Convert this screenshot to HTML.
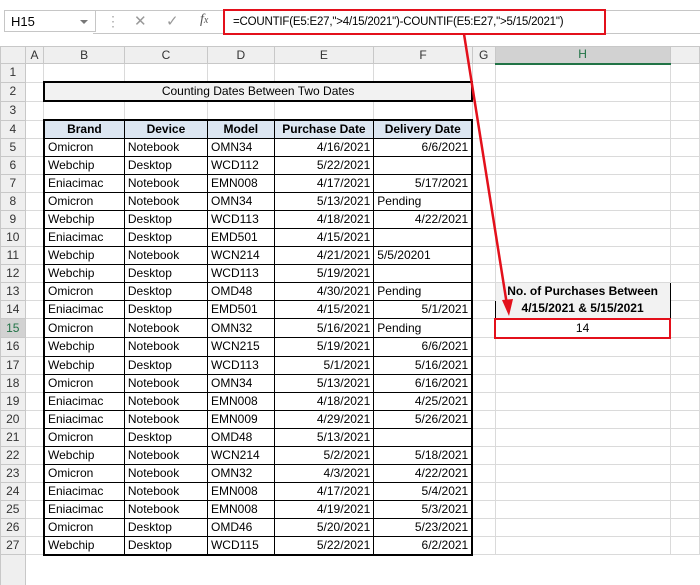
<!DOCTYPE html>
<html><head><style>
body{margin:0;width:700px;height:574px;overflow:hidden;background:#fff;font-family:"Liberation Sans",Calibri,sans-serif;position:relative}
.top{position:absolute;left:0;top:0;width:700px;height:46px;background:#fff;border-bottom:1px solid #d4d4d4}
.nb{position:absolute;left:4px;top:10px;width:92px;height:22px;border:1px solid #c6c6c6;font-size:13px;line-height:22px;box-sizing:border-box;padding-left:6px}
.nb:after{content:"";position:absolute;right:7px;top:9px;border:4px solid transparent;border-top:4px solid #777}
.fx{position:absolute;left:93px;top:10px;width:610px;height:22px;border:1px solid #c6c6c6;border-left:none}
table{position:absolute;left:0;top:46px;border-collapse:collapse;table-layout:fixed;font-size:12px}
td{height:17px;padding:0 3px;border:1px solid #dadada;white-space:nowrap;overflow:hidden;line-height:15px}
tr.h td{height:15.5px;background:#efefef;text-align:center;color:#333;border-color:#c8c8c8}
td.r{background:#efefef;text-align:center;color:#333;border-color:#c8c8c8;padding:0}
.b{border:1px solid #000}
.rt{text-align:right}
.hd{background:#dce6f1;text-align:center;font-weight:bold;border:1px solid #000}
</style></head><body>
<div class="top">
<div class="nb">H15</div>
<div style="position:absolute;left:106px;top:13px;color:#aaa;font-size:14px">⋮</div>
<div class="fx"></div>
<div style="position:absolute;left:134px;top:12px;color:#999;font-size:15px">✕</div>
<div style="position:absolute;left:166px;top:12px;color:#999;font-size:15px">✓</div>
<div style="position:absolute;left:200px;top:12px;color:#555;font-size:14px;font-style:italic;font-family:'Liberation Serif',serif">f<span style="font-size:10px">x</span></div>
<div style="position:absolute;left:223px;top:9px;width:371px;height:22px;border:2px solid #e3101b;font-size:11.5px;letter-spacing:-0.2px;line-height:22px;padding-left:8px;white-space:nowrap;overflow:hidden;box-sizing:content-box">=COUNTIF(E5:E27,"&gt;4/15/2021")-COUNTIF(E5:E27,"&gt;5/15/2021")</div>
</div>
<table>
<colgroup><col style="width:25px"><col style="width:19px"><col style="width:81px"><col style="width:84px"><col style="width:67px"><col style="width:100px"><col style="width:99px"><col style="width:23px"><col style="width:179px"><col style="width:30px"></colgroup>
<tr class="h"><td></td><td>A</td><td>B</td><td>C</td><td>D</td><td>E</td><td>F</td><td>G</td><td style="background:#d2d2d2;border-bottom:2px solid #217346;color:#217346">H</td><td></td></tr>
<tr><td class="r">1</td><td></td><td></td><td></td><td></td><td></td><td></td><td></td><td></td><td></td></tr>
<tr><td class="r">2</td><td></td><td colspan="5" style="border:2px solid #000;background:#f2f2f2;text-align:center">Counting Dates Between Two Dates</td><td></td><td></td><td></td></tr>
<tr><td class="r">3</td><td></td><td></td><td></td><td></td><td></td><td></td><td></td><td></td><td></td></tr>
<tr><td class="r">4</td><td></td><td class="hd" style="border-left:2px solid #000;border-top:2px solid #000">Brand</td><td class="hd" style="border-top:2px solid #000">Device</td><td class="hd" style="border-top:2px solid #000">Model</td><td class="hd" style="border-top:2px solid #000">Purchase Date</td><td class="hd" style="border-top:2px solid #000;border-right:2px solid #000">Delivery Date</td><td></td><td></td><td></td></tr>
<tr><td class="r">5</td><td></td><td class="b" style="border-left:2px solid #000">Omicron</td><td class="b">Notebook</td><td class="b">OMN34</td><td class="b rt">4/16/2021</td><td class="b rt" style="border-right:2px solid #000">6/6/2021</td><td></td><td></td><td></td></tr>
<tr><td class="r">6</td><td></td><td class="b" style="border-left:2px solid #000">Webchip</td><td class="b">Desktop</td><td class="b">WCD112</td><td class="b rt">5/22/2021</td><td class="b rt" style="border-right:2px solid #000"></td><td></td><td></td><td></td></tr>
<tr><td class="r">7</td><td></td><td class="b" style="border-left:2px solid #000">Eniacimac</td><td class="b">Notebook</td><td class="b">EMN008</td><td class="b rt">4/17/2021</td><td class="b rt" style="border-right:2px solid #000">5/17/2021</td><td></td><td></td><td></td></tr>
<tr><td class="r">8</td><td></td><td class="b" style="border-left:2px solid #000">Omicron</td><td class="b">Notebook</td><td class="b">OMN34</td><td class="b rt">5/13/2021</td><td class="b" style="border-right:2px solid #000">Pending</td><td></td><td></td><td></td></tr>
<tr><td class="r">9</td><td></td><td class="b" style="border-left:2px solid #000">Webchip</td><td class="b">Desktop</td><td class="b">WCD113</td><td class="b rt">4/18/2021</td><td class="b rt" style="border-right:2px solid #000">4/22/2021</td><td></td><td></td><td></td></tr>
<tr><td class="r">10</td><td></td><td class="b" style="border-left:2px solid #000">Eniacimac</td><td class="b">Desktop</td><td class="b">EMD501</td><td class="b rt">4/15/2021</td><td class="b rt" style="border-right:2px solid #000"></td><td></td><td></td><td></td></tr>
<tr><td class="r">11</td><td></td><td class="b" style="border-left:2px solid #000">Webchip</td><td class="b">Notebook</td><td class="b">WCN214</td><td class="b rt">4/21/2021</td><td class="b" style="border-right:2px solid #000">5/5/20201</td><td></td><td></td><td></td></tr>
<tr><td class="r">12</td><td></td><td class="b" style="border-left:2px solid #000">Webchip</td><td class="b">Desktop</td><td class="b">WCD113</td><td class="b rt">5/19/2021</td><td class="b rt" style="border-right:2px solid #000"></td><td></td><td></td><td></td></tr>
<tr><td class="r">13</td><td></td><td class="b" style="border-left:2px solid #000">Omicron</td><td class="b">Desktop</td><td class="b">OMD48</td><td class="b rt">4/30/2021</td><td class="b" style="border-right:2px solid #000">Pending</td><td></td><td rowspan="2" style="border:1px solid #000;border-bottom:none;background:#f2f2f2;text-align:center;font-weight:bold;line-height:17px;white-space:normal">No. of Purchases Between<br>4/15/2021 &amp; 5/15/2021</td><td></td></tr>
<tr><td class="r">14</td><td></td><td class="b" style="border-left:2px solid #000">Eniacimac</td><td class="b">Desktop</td><td class="b">EMD501</td><td class="b rt">4/15/2021</td><td class="b rt" style="border-right:2px solid #000">5/1/2021</td><td></td><td></td></tr>
<tr><td class="r" style="background:#d2d2d2;color:#217346">15</td><td></td><td class="b" style="border-left:2px solid #000">Omicron</td><td class="b">Notebook</td><td class="b">OMN32</td><td class="b rt">5/16/2021</td><td class="b" style="border-right:2px solid #000">Pending</td><td></td><td style="border:2px solid #e3101b;text-align:center">14</td><td></td></tr>
<tr><td class="r">16</td><td></td><td class="b" style="border-left:2px solid #000">Webchip</td><td class="b">Notebook</td><td class="b">WCN215</td><td class="b rt">5/19/2021</td><td class="b rt" style="border-right:2px solid #000">6/6/2021</td><td></td><td></td><td></td></tr>
<tr><td class="r">17</td><td></td><td class="b" style="border-left:2px solid #000">Webchip</td><td class="b">Desktop</td><td class="b">WCD113</td><td class="b rt">5/1/2021</td><td class="b rt" style="border-right:2px solid #000">5/16/2021</td><td></td><td></td><td></td></tr>
<tr><td class="r">18</td><td></td><td class="b" style="border-left:2px solid #000">Omicron</td><td class="b">Notebook</td><td class="b">OMN34</td><td class="b rt">5/13/2021</td><td class="b rt" style="border-right:2px solid #000">6/16/2021</td><td></td><td></td><td></td></tr>
<tr><td class="r">19</td><td></td><td class="b" style="border-left:2px solid #000">Eniacimac</td><td class="b">Notebook</td><td class="b">EMN008</td><td class="b rt">4/18/2021</td><td class="b rt" style="border-right:2px solid #000">4/25/2021</td><td></td><td></td><td></td></tr>
<tr><td class="r">20</td><td></td><td class="b" style="border-left:2px solid #000">Eniacimac</td><td class="b">Notebook</td><td class="b">EMN009</td><td class="b rt">4/29/2021</td><td class="b rt" style="border-right:2px solid #000">5/26/2021</td><td></td><td></td><td></td></tr>
<tr><td class="r">21</td><td></td><td class="b" style="border-left:2px solid #000">Omicron</td><td class="b">Desktop</td><td class="b">OMD48</td><td class="b rt">5/13/2021</td><td class="b rt" style="border-right:2px solid #000"></td><td></td><td></td><td></td></tr>
<tr><td class="r">22</td><td></td><td class="b" style="border-left:2px solid #000">Webchip</td><td class="b">Notebook</td><td class="b">WCN214</td><td class="b rt">5/2/2021</td><td class="b rt" style="border-right:2px solid #000">5/18/2021</td><td></td><td></td><td></td></tr>
<tr><td class="r">23</td><td></td><td class="b" style="border-left:2px solid #000">Omicron</td><td class="b">Notebook</td><td class="b">OMN32</td><td class="b rt">4/3/2021</td><td class="b rt" style="border-right:2px solid #000">4/22/2021</td><td></td><td></td><td></td></tr>
<tr><td class="r">24</td><td></td><td class="b" style="border-left:2px solid #000">Eniacimac</td><td class="b">Notebook</td><td class="b">EMN008</td><td class="b rt">4/17/2021</td><td class="b rt" style="border-right:2px solid #000">5/4/2021</td><td></td><td></td><td></td></tr>
<tr><td class="r">25</td><td></td><td class="b" style="border-left:2px solid #000">Eniacimac</td><td class="b">Notebook</td><td class="b">EMN008</td><td class="b rt">4/19/2021</td><td class="b rt" style="border-right:2px solid #000">5/3/2021</td><td></td><td></td><td></td></tr>
<tr><td class="r">26</td><td></td><td class="b" style="border-left:2px solid #000">Omicron</td><td class="b">Desktop</td><td class="b">OMD46</td><td class="b rt">5/20/2021</td><td class="b rt" style="border-right:2px solid #000">5/23/2021</td><td></td><td></td><td></td></tr>
<tr><td class="r">27</td><td></td><td class="b" style="border-left:2px solid #000;border-bottom:2px solid #000">Webchip</td><td class="b" style="border-bottom:2px solid #000">Desktop</td><td class="b" style="border-bottom:2px solid #000">WCD115</td><td class="b rt" style="border-bottom:2px solid #000">5/22/2021</td><td class="b rt" style="border-right:2px solid #000;border-bottom:2px solid #000">6/2/2021</td><td></td><td></td><td></td></tr>
<tr><td class="r" style="border-bottom:none;height:30px"></td><td style="border:none"></td><td style="border:none"></td><td style="border:none"></td><td style="border:none"></td><td style="border:none"></td><td style="border:none"></td><td style="border:none"></td><td style="border:none"></td><td style="border:none"></td></tr>
</table>
<svg style="position:absolute;left:0;top:0" width="700" height="574">
<line x1="464" y1="34" x2="507" y2="305" stroke="#e3101b" stroke-width="2.5"/>
<polygon points="509,316 502,300 513,299" fill="#e3101b"/>
</svg>
</body></html>
